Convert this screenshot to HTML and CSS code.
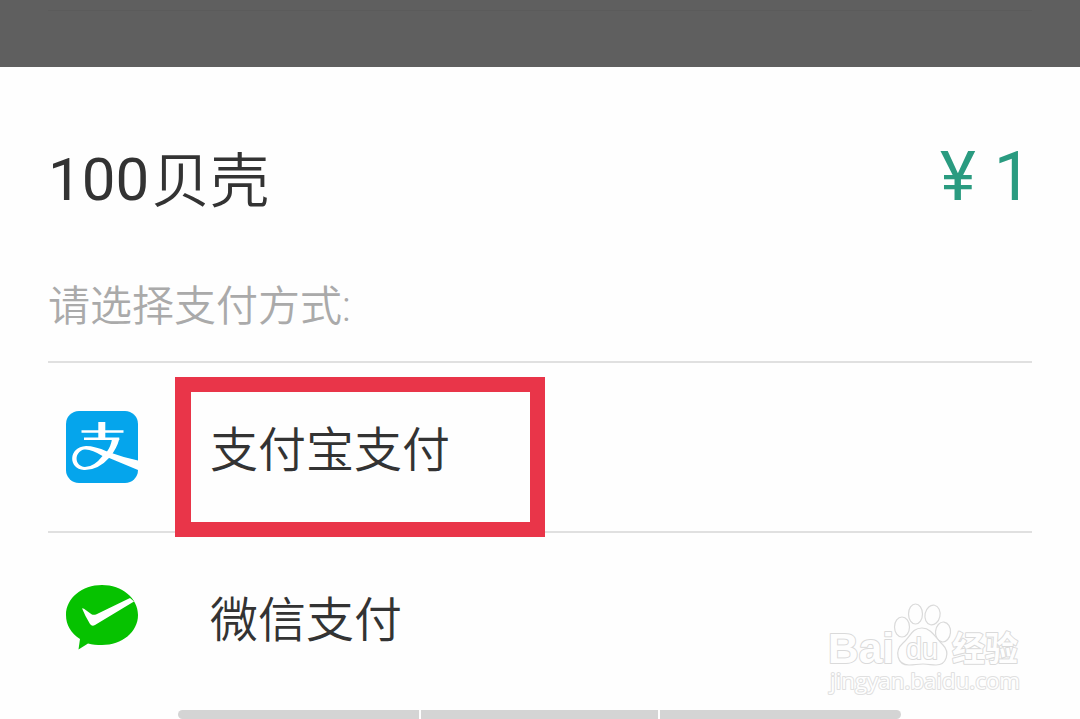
FILE: index.html
```html
<!DOCTYPE html>
<html lang="zh-CN">

<head>
    <meta charset="utf-8">
    <title>支付</title>
    <link rel="stylesheet" href="styles.css">
</head>

<body>
    <div class="mask">
        <div class="mask-line"></div>
    </div>
    <div class="sheet">
        <div class="order">
            <div class="goods">100<span class="goods-unit">贝壳</span></div>
            <div class="price"><span>¥</span><span>1</span></div>
        </div>
        <div class="tip">请选择支付方式:</div>

        <div class="pay-item">
            <svg class="pay-icon" viewBox="0 0 72 72">
                <rect width="72" height="72" rx="13" fill="#05a5ec" />
                <path d="M15.500 19.300h42v2.500h-42zM18 26.500h35.300v2.500H18zM32.300 11h7v16h-7z" fill="#fff" />
                <path d="M46 28h7.300Q51 37 44 46 32 59.500 18 59C2 58 2 36 20 35q9 0 21 5.500Q45 35 46 28zM36.500 45Q25 37.500 18 38.500C8 41 8 55 19 56q9 0 17.500-11z" fill="#fff" fill-rule="evenodd" />
                <path d="M41 40.500Q56 46 72 49.500V59L36 44z" fill="#fff" />
            </svg>
            <div class="pay-name">支付宝支付</div>
            <div class="highlight"></div>
        </div>

        <div class="pay-item">
            <svg class="pay-icon" viewBox="0 0 72 72">
                <path d="M36 4C16 4 0 17 0 34c0 10 5 18 14 24l-1.500 10.500L22 62.500c4 1 9 1.500 14 1.500 20 0 36-13 36-30S56 4 36 4z" fill="#06c200" />
                <path d="M16 27.300q2 0 4 2l5.500 4q2 1 5 0L64 17l4 3.500L29 44q-3 2-5-1-5-8-8-15.700z" fill="#fff" />
            </svg>
            <div class="pay-name">微信支付</div>
        </div>

        <div class="bar">
            <div class="bar-part"></div>
            <div class="bar-part bar-middle"></div>
            <div class="bar-part"></div>
        </div>
    </div>

    <!-- watermark -->
    <svg class="watermark" viewBox="0 0 220 115">
        <text class="wm-brand" x="13" y="73" textLength="66" lengthAdjust="spacingAndGlyphs">Bai</text>
        <ellipse cx="87" cy="37" rx="7.500" ry="10" />
        <ellipse cx="100.500" cy="24" rx="7" ry="10" />
        <ellipse cx="117.500" cy="25" rx="7.500" ry="10" transform="rotate(12 117.500 25)" />
        <ellipse cx="128" cy="42" rx="7.500" ry="10" transform="rotate(5 128 42)" />
        <path d="M107 38c-10 0-12 9-19 15-9 8-6 22 6 22 6 0 8-1 14-1s8 1 13 1c11 0 14-13 7-20-7-6-11-17-21-17z" />
        <text class="wm-du" x="91" y="69" textLength="32" lengthAdjust="spacingAndGlyphs">du</text>
        <text class="wm-cn" x="137" y="71" textLength="66" lengthAdjust="spacingAndGlyphs">经验</text>
        <text class="wm-url" x="15" y="99" textLength="190" lengthAdjust="spacingAndGlyphs">jingyan.baidu.com</text>
    </svg>
</body>

</html>
```
FILE: styles.css
```css
body {
    margin: 0;
    height: 719px;
    overflow: hidden;
    background-color: #fefefe;
    font-family: Roboto, "Noto Sans CJK SC", sans-serif;
    color: #333;
}

.mask {
    box-sizing: border-box;
    height: 67px;
    padding: 10px 48px 0;
    background-color: #5f5f5f;
}

.mask-line {
    height: 1px;
    background-color: #5b5b5b;
}

.sheet {
    padding: 0 48px;
}

.order {
    display: flex;
    justify-content: space-between;
    height: 193px;
    padding-top: 1px;
    box-sizing: border-box;
}

.goods {
    font-size: 60px;
    line-height: 224px;
}

.goods-unit {
    margin-left: 2px;
    font-size: 59px;
    font-weight: 350;
    line-height: 0;
    vertical-align: -2px;
}

.price {
    display: flex;
    gap: 18px;
    font-size: 68px;
    line-height: 218px;
    color: #2a9b80;
}

.tip {
    height: 101px;
    font-size: 42px;
    font-weight: 350;
    line-height: 93px;
    color: #aaa;
}

.pay-item {
    position: relative;
    display: flex;
    box-sizing: border-box;
    height: 170px;
    padding: 48px 18px 0;
    border-top: 2px solid #e0e0e0;
}

.pay-icon {
    width: 72px;
    height: 72px;
}

.pay-name {
    margin-left: 72px;
    font-size: 48px;
    font-weight: 350;
    line-height: 80px;
}

/* red frame drawn over the row */
.highlight {
    position: absolute;
    left: 127px;
    top: 14px;
    width: 339px;
    height: 130px;
    border: 15px solid #e93549;
    border-left-width: 16px;
    z-index: 1;
}

.bar {
    display: flex;
    gap: 2px;
    width: 723px;
    height: 9px;
    margin: 9px 0 0 130px;
    border-radius: 5px;
    overflow: hidden;
}

.bar-part {
    flex: 1;
    background-color: #d4d4d4;
}

.bar-middle {
    flex: 0 0 237px;
}

.watermark {
    position: absolute;
    left: 815px;
    top: 590px;
    width: 220px;
    height: 115px;
    fill: #fefefe;
    stroke: #dadada;
    stroke-width: 1.2;
}

.watermark text {
    stroke-width: 2;
    stroke-linejoin: round;
    paint-order: stroke;
}

.wm-brand {
    font: bold 43px "Liberation Sans", sans-serif;
}

.watermark .wm-du {
    font: 29px "Liberation Sans", sans-serif;
}

.wm-cn {
    font: bold 34px "Noto Sans CJK SC", sans-serif;
}

.wm-url {
    font: 22px "Open Sans", sans-serif;
    stroke: #e0e0e0;
}
```
